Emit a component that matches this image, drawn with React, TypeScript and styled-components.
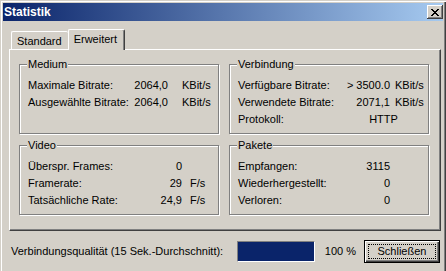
import React from "react";
import styled, { createGlobalStyle } from "styled-components";

const GlobalStyle = createGlobalStyle`
  html, body {
    margin: 0;
    padding: 0;
    background: #d4d0c8;
  }
  body {
    font-family: "Liberation Sans", Arial, sans-serif;
    font-size: 11px;
    color: #000;
  }
`;

interface IRow {
  label: string;
  value: string;
  unit?: string;
  centered?: boolean;
}

interface IGroup {
  title: string;
  cols: string;
  rows: IRow[];
}

const groups: IGroup[] = [
  {
    title: "Medium",
    cols: "100px 40px 14px 1fr",
    rows: [
      { label: "Maximale Bitrate:", value: "2064,0", unit: "KBit/s" },
      { label: "Ausgewählte Bitrate:", value: "2064,0", unit: "KBit/s" },
    ],
  },
  {
    title: "Verbindung",
    cols: "100px 52px 5px 34px",
    rows: [
      { label: "Verfügbare Bitrate:", value: "> 3500.0", unit: "KBit/s" },
      { label: "Verwendete Bitrate:", value: "2071,1", unit: "KBit/s" },
      { label: "Protokoll:", value: "HTTP", centered: true },
    ],
  },
  {
    title: "Video",
    cols: "110px 44px 8px 1fr",
    rows: [
      { label: "Überspr. Frames:", value: "0" },
      { label: "Framerate:", value: "29", unit: "F/s" },
      { label: "Tatsächliche Rate:", value: "24,9", unit: "F/s" },
    ],
  },
  {
    title: "Pakete",
    cols: "110px 42px",
    rows: [
      { label: "Empfangen:", value: "3115" },
      { label: "Wiederhergestellt:", value: "0" },
      { label: "Verloren:", value: "0" },
    ],
  },
];

const closeGlyph = [
  "11000011",
  "01100110",
  "00111100",
  "00011000",
  "00111100",
  "01100110",
  "11000011",
];

const CloseIcon = () => (
  <svg width="8" height="7" viewBox="0 0 8 7" shapeRendering="crispEdges">
    {closeGlyph.map((line, y) =>
      line.split("").map((c, x) =>
        c === "1" ? (
          <rect key={`${x}-${y}`} x={x} y={y} width="1" height="1" fill="#000" />
        ) : null
      )
    )}
  </svg>
);

const renderRow = (row: IRow) => (
  <React.Fragment key={row.label}>
    <SLabel>{row.label}</SLabel>
    {row.centered ? (
      <SCentered>{row.value}</SCentered>
    ) : (
      <SValue>{row.value}</SValue>
    )}
    {row.unit && <SUnit>{row.unit}</SUnit>}
  </React.Fragment>
);

export default function App() {
  return (
    <>
      <GlobalStyle />
      <SWindow>
        <STitleBar>
          <span>Statistik</span>
          <SCloseButton>
            <CloseIcon />
          </SCloseButton>
        </STitleBar>
        <SBody>
          <STabRow>
            <STab>Standard</STab>
            <STab $active>Erweitert</STab>
          </STabRow>
          <SPanel>
            {groups.map((group) => (
              <SGroup key={group.title}>
                <SLegend>{group.title}</SLegend>
                <SDataGrid $cols={group.cols}>
                  {group.rows.map(renderRow)}
                </SDataGrid>
              </SGroup>
            ))}
          </SPanel>
          <SFooter>
            <SFooterLabel>Verbindungsqualität (15 Sek.-Durchschnitt):</SFooterLabel>
            <SProgress>
              <SProgressFill style={{ width: "100%" }} />
            </SProgress>
            <SPercent>100 %</SPercent>
            <SButton>
              <SFocus>Schließen</SFocus>
            </SButton>
          </SFooter>
        </SBody>
      </SWindow>
    </>
  );
}

const SWindow = styled.div`
  width: 446px;
  height: 271px;
  box-sizing: border-box;
  padding: 3px 3px 0 3px;
  background: #d4d0c8;
  display: flex;
  flex-direction: column;
  overflow: hidden;
  box-shadow: inset 1px 1px 0 #d4d0c8, inset 2px 2px 0 #fff,
    inset -1px 0 0 #404040, inset -2px 0 0 #808080;
`;

const STitleBar = styled.div`
  height: 18px;
  flex: none;
  display: flex;
  align-items: center;
  justify-content: space-between;
  padding-left: 1px;
  background: linear-gradient(to right, #0a246a, #a6caf0);
  color: #fff;
  font-weight: bold;
  font-size: 12px;
`;

const SCloseButton = styled.div`
  width: 16px;
  height: 14px;
  box-sizing: border-box;
  display: flex;
  align-items: center;
  justify-content: center;
  padding-right: 1px;
  background: #d4d0c8;
  box-shadow: inset -1px -1px 0 #404040, inset 1px 1px 0 #fff,
    inset -2px -2px 0 #808080;
`;

const SBody = styled.div`
  flex: 1;
  display: flex;
  flex-direction: column;
  padding: 8px 2px 0 6px;
`;

const STabRow = styled.div`
  height: 20px;
  display: flex;
  align-items: flex-end;
  padding-left: 2px;
  position: relative;
  z-index: 1;
`;

const STab = styled.div<{ $active?: boolean }>`
  box-sizing: border-box;
  height: ${(p) => (p.$active ? 21 : 18)}px;
  margin-bottom: ${(p) => (p.$active ? -1 : 0)}px;
  padding: ${(p) => (p.$active ? "0 7px 2px 5px" : "0 6px 0 5px")};
  display: flex;
  align-items: center;
  background: #d4d0c8;
  border-left: 1px solid #fff;
  border-top: 1px solid #fff;
  border-right: ${(p) => (p.$active ? "1px solid #404040" : "none")};
  box-shadow: ${(p) => (p.$active ? "inset -1px 0 0 #808080" : "none")};
  border-radius: 2px 2px 0 0;
`;

const SPanel = styled.div`
  height: 182px;
  box-sizing: border-box;
  flex: none;
  border-top: 1px solid #fff;
  border-left: 1px solid #fff;
  border-right: 1px solid #404040;
  border-bottom: 1px solid #404040;
  box-shadow: inset -1px -1px 0 #808080;
  padding: 8px 11px 0 9px;
  display: grid;
  grid-template-columns: 1fr 1fr;
  column-gap: 10px;
  row-gap: 5px;
  align-content: start;
`;

const SGroup = styled.fieldset`
  margin: 0;
  min-width: 0;
  padding: 6px 5px 5px 8px;
  border: 1px solid #808080;
  box-shadow: inset 1px 1px 0 #fff, 1px 1px 0 #fff;
`;

const SLegend = styled.legend`
  padding: 0 1px;
  margin-left: -1px;
  line-height: 13px;
  background: #d4d0c8;
`;

const SDataGrid = styled.div<{ $cols: string }>`
  display: grid;
  grid-template-columns: ${(p) => p.$cols};
  grid-auto-rows: 17px;
  line-height: 17px;
  white-space: nowrap;
`;

const SLabel = styled.span`
  grid-column: 1;
`;

const SValue = styled.span`
  grid-column: 2;
  text-align: right;
`;

const SUnit = styled.span`
  grid-column: 4;
`;

const SCentered = styled.span`
  grid-column: 2 / 5;
  text-align: center;
`;

const SFooter = styled.div`
  flex: 1;
  display: flex;
  align-items: center;
  padding: 0 1px 0 2px;
`;

const SFooterLabel = styled.span`
  flex: 1;
  white-space: nowrap;
`;

const SProgress = styled.div`
  width: 78px;
  height: 21px;
  box-sizing: border-box;
  border: 1px solid;
  border-color: #808080 #fff #fff #808080;
  margin-right: 10px;
  display: flex;
`;

const SProgressFill = styled.div`
  background: #0a246a;
`;

const SPercent = styled.span`
  margin-right: 8px;
  white-space: nowrap;
`;

const SButton = styled.div`
  width: 76px;
  height: 23px;
  box-sizing: border-box;
  border: 1px solid #000;
  padding: 3px;
  background: #d4d0c8;
  box-shadow: inset 1px 1px 0 #fff, inset -1px -1px 0 #404040,
    inset -2px -2px 0 #808080;
  display: flex;
`;

const SFocus = styled.span`
  flex: 1;
  display: flex;
  align-items: center;
  justify-content: center;
  border: 1px dotted #000;
`;
